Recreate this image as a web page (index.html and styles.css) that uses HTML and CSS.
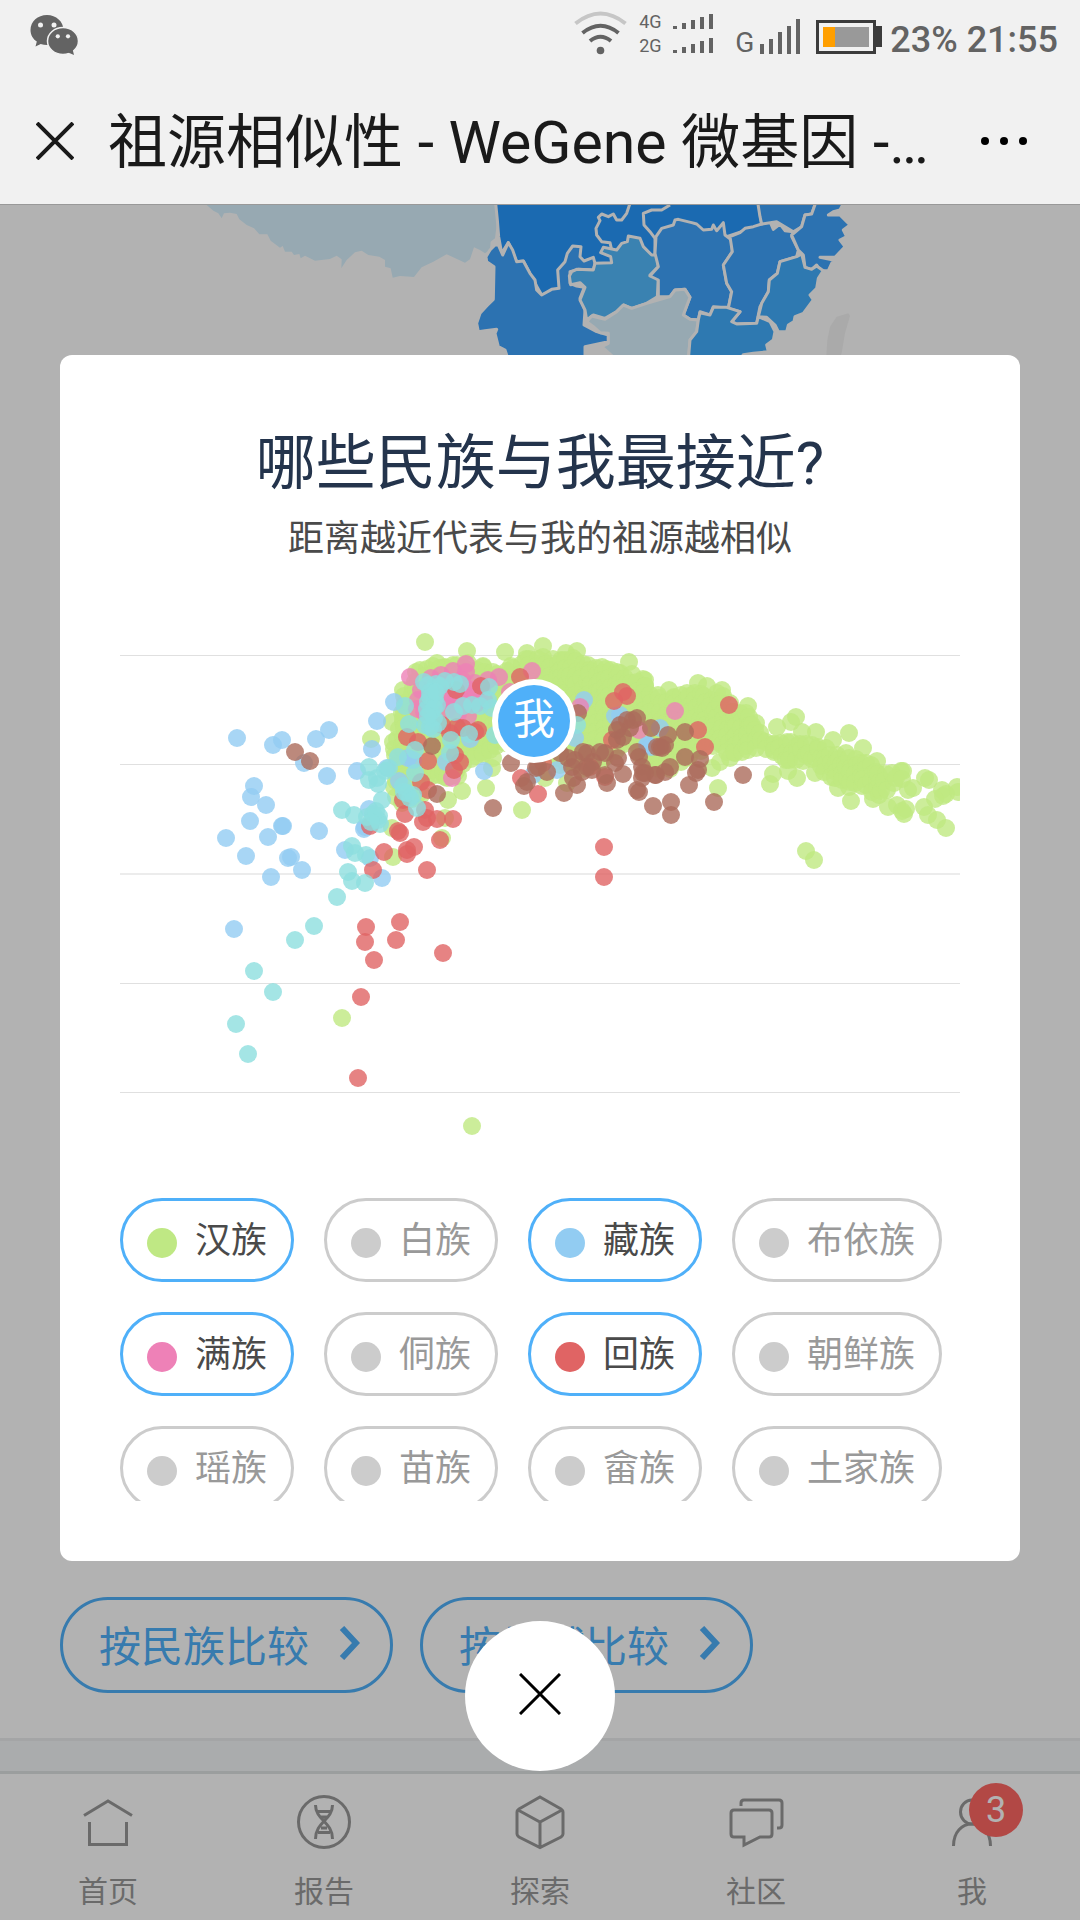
FILE: index.html
```html
<!DOCTYPE html>
<html lang="zh-CN">
<head>
    <meta charset="UTF-8">
    <title>祖源相似性 - WeGene 微基因</title>
    <meta name="viewport" content="width=device-width, initial-scale=1">
    <link rel="stylesheet" href="styles.css">
</head>
<body>

<header class="top">
    <div class="status-bar">
        <svg class="wechat" width="50" height="44" viewBox="29 13 50 44">
            <path fill="#636363" d="M47 15c-9.300 0-16.500 6.600-16.500 15 0 5 2.500 9 6.300 11.600L35.500 46.500l5.200-2.600c2 .7 4.200 1.100 6.300 1.100 9.100 0 16.500-6.700 16.500-15S56.100 15 47 15z"/>
            <ellipse cx="63" cy="41" rx="15.500" ry="13.500" fill="#636363" stroke="#f1f1f1" stroke-width="1.500"/>
            <path fill="#636363" d="M67 52l7 3-1.500-6z"/>
            <g fill="#f1f1f1">
                <circle cx="40.500" cy="25" r="2.500"/>
                <circle cx="54" cy="25" r="2.500"/>
                <circle cx="57.800" cy="36.300" r="2.100"/>
                <circle cx="68" cy="36.300" r="2.100"/>
            </g>
        </svg>
        <div class="indicators">
            <svg class="wifi" width="54" height="46" viewBox="574 9 54 46" fill="none" stroke="#636363" stroke-width="4">
                <path stroke="#c6c6c6" d="M576.500 23.500Q601.500 3.500 626.500 23.500"/>
                <path d="M583.500 33Q601.500 18.500 619.500 33"/>
                <path d="M591 41Q601.500 32.500 612 41"/>
                <circle cx="601.500" cy="50.500" r="3.800" fill="#636363" stroke="none"/>
            </svg>
            <div class="sims">
                <div class="sim">
                    <span>4G</span>
                    <svg width="40" height="15" fill="#636363">
                        <path d="M0 12h4v3H0zM9 9h4v6H9zM18 6h4v9h-4zM27 3h4v12h-4zM36 0h4v15h-4z"/>
                    </svg>
                </div>
                <div class="sim">
                    <span>2G</span>
                    <svg width="40" height="15" fill="#636363">
                        <path d="M0 12h4v3H0zM9 9h4v6H9zM18 6h4v9h-4zM27 3h4v12h-4zM36 0h4v15h-4z"/>
                    </svg>
                </div>
            </div>
            <div class="signal">
                <span>G</span>
                <svg width="40" height="35" fill="#636363">
                    <path d="M0 25h4v10H0zM9 20h4v15H9zM18 13h4v22h-4zM27 7h4v28h-4zM36 0h4v35h-4z"/>
                </svg>
            </div>
            <svg class="battery" width="66" height="34">
                <rect x="1.500" y="1.500" width="57" height="31" fill="none" stroke="#3c3c3c" stroke-width="3"/>
                <rect x="60" y="6" width="6" height="21" fill="#3c3c3c"/>
                <rect x="7" y="7" width="46" height="20" fill="#999"/>
                <rect x="7" y="7" width="12" height="20" fill="#ff9f00"/>
            </svg>
            <span class="clock">23% 21:55</span>
        </div>
    </div>
    <div class="title-bar">
        <button class="icon-btn" aria-label="关闭">
            <svg width="38" height="38" fill="none" stroke="#1a1a1a" stroke-width="4"><path d="M1 1L37 37M37 1L1 37"/></svg>
        </button>
        <h1>祖源相似性 - WeGene 微基因 -…</h1>
        <button class="icon-btn" aria-label="更多">
            <svg width="48" height="10"><circle cx="5" cy="5" r="4"/><circle cx="24" cy="5" r="4"/><circle cx="43" cy="5" r="4"/></svg>
        </button>
    </div>
</header>

<div class="content">
    <main>
        <svg class="map" viewBox="-540 15 3240 450" stroke="#fff" stroke-width="9" stroke-linejoin="round">
            <!-- 西藏 -->
            <path fill="#d9f3ff" stroke="none" d="M80 15L100 32 115 40 125 55 132 40 150 38 170 42 178 58 200 75 222 85 238 103 262 103 272 122 300 143 308 138 315 155 335 155 342 165 358 162 362 175 375 167 405 182 450 177 470 167 485 178 484 205 500 180 525 157 545 152 565 165 598 170 615 180 615 200 632 205 638 233 660 228 702 231 725 202 760 185 800 163 855 188 870 178 882 142 900 150 915 160 930 150 932 125 945 115 952 60 945 15z"/>
            <!-- 四川 湖北 -->
            <path fill="#2899fe" d="M946 0L952 60 956 110 965 160 985 128 1010 185 1030 183 1065 250 1085 285 1140 265 1295 190 1430 190 1640 110 1745 75 1735 0z"/>
            <!-- 云南 -->
            <path fill="#40a4fe" d="M930 150L945 135 955 135 968 165 985 128 998 150 1010 185 1030 183 1050 220 1065 240 1070 270 1085 285 1115 268 1137 265 1133 210 1155 185 1162 160 1178 138 1203 140 1200 170 1212 183 1240 172 1245 190 1240 210 1195 208 1170 215 1170 250 1190 258 1213 262 1200 295 1215 330 1212 375 1250 395 1285 405 1285 425 1215 440 1215 480 985 480 975 450 955 440 945 400 950 388 915 392 895 395 890 370 900 340 920 318 940 298 942 200 920 185 918 170z"/>
            <g transform="translate(1080 0)">
                <!-- 重庆 -->
                <path fill="none" d="M270 10L260 40 245 60 230 60 220 42 205 50 185 42 175 52 180 62 168 85 170 105 185 125 210 128 215 150M390 15L365 30 335 30 310 40 312 75 330 95 345 115 345 165"/>
                <!-- 贵州 -->
                <path fill="#53bafe" d="M95 215L110 208 160 210 165 190 215 188 212 170 182 158 190 142 230 150 245 130 262 125 265 108 300 115 310 140 335 165 350 165 355 200 330 225 355 235 352 290 320 310 275 325 250 315 230 335 195 355 160 345 140 360 135 330 120 300 135 262 120 248 92 254 88 228z"/>
                <!-- 湖南 -->
                <path fill="#40a4fe" d="M348 110L365 85 400 75 405 60 415 58 455 68 470 72 490 90 515 88 520 75 530 92 550 68 555 105 575 120 577 155 550 195 560 250 575 275 565 325 520 320 510 345 480 335 475 360 450 358 430 345 450 292 435 268 405 270 390 290 355 290 355 240 330 228 355 200 345 160z"/>
                <!-- 江西 -->
                <path fill="#40a4fe" d="M570 110L600 98 615 85 640 80 665 72 690 65 700 88 720 72 735 92 760 95 755 110 775 150 770 170 720 185 712 220 688 240 685 275 660 320 650 370 590 372 575 365 600 335 565 325 575 275 560 250 550 195 577 155z"/>
                <!-- 安徽 -->
                <path fill="#40a4fe" d="M652 0L660 50 665 72 710 65 735 80 760 95 785 80 795 45 815 42 830 0z"/>
                <!-- 浙江 -->
                <path fill="#40a4fe" d="M830 0L815 42 795 45 785 80 755 105 775 150 790 165 795 202 815 208 830 195 840 212 865 212 880 180 840 172 885 172 915 140 900 120 920 110 910 90 930 75 900 45 865 45 880 35 900 30 915 0z"/>
                <!-- 福建 -->
                <path fill="#42aefe" d="M785 162L795 202 815 208 830 198 850 212 835 235 830 265 810 285 820 300 790 340 765 350 762 365 745 375 740 395 715 395 705 375 680 352 655 350 665 310 685 275 688 240 712 220 720 185 770 170z"/>
                <!-- 广西 -->
                <path fill="#d9f3ff" d="M140 365L155 348 195 358 230 335 250 315 275 325 320 310 390 290 405 270 435 268 450 292 430 345 450 358 475 360 470 395 450 420 445 480 230 480 185 440 205 430 205 400 180 398 160 380z"/>
                <!-- 广东 -->
                <path fill="#42aefe" d="M475 360L480 338 510 345 520 322 560 322 600 335 575 365 590 372 650 370 655 350 690 365 705 395 700 420 680 435 685 455 640 460 610 464 600 480 445 480 450 420 470 395z"/>
                <!-- 台湾 -->
                <path fill="#f4f4f4" stroke="none" d="M890 350L925 340 930 348 915 400 905 460 895 480 858 480 862 420 870 380z"/>
            </g>
        </svg>
        <div class="compare">
            <button class="compare-btn"><span>按民族比较</span>
                <svg width="21" height="34" fill="none" stroke="#4fb0f9" stroke-width="6"><path d="M3 2L17 17 3 32"/></svg>
            </button>
            <button class="compare-btn"><span>按地域比较</span>
                <svg width="21" height="34" fill="none" stroke="#4fb0f9" stroke-width="6"><path d="M3 2L17 17 3 32"/></svg>
            </button>
        </div>
        <div class="divider"></div>
    </main>

    <nav class="tabs">
        <a href="#">
            <svg width="60" height="60" viewBox="0 0 60 60">
                <path d="M6 23.500L30 9 54 23.500M11.500 30v22.500h37V30"/>
            </svg>
            首页
        </a>
        <a href="#">
            <svg width="60" height="60" viewBox="0 0 60 60">
                <circle cx="30" cy="30" r="25.500"/>
                <path d="M21.500 13C21.500 28 38.500 30 38.500 47M38.500 13C38.500 28 21.500 30 21.500 47M23 19.500h14M24 40.500h12M27 25h6M27 36h6"/>
            </svg>
            报告
        </a>
        <a href="#">
            <svg width="60" height="60" viewBox="0 0 60 60">
                <path d="M30 5L51 17Q53 18.500 53 20V42Q53 43.500 51 45L30 55.500 9 45Q7 43.500 7 42V20Q7 18.500 9 17zM8 18L30 30 52 18M30 30V55"/>
            </svg>
            探索
        </a>
        <a href="#">
            <svg width="60" height="60" viewBox="0 0 60 60">
                <path d="M15 14V11Q15 8 18 8H53Q56 8 56 11V33Q56 36 53 36H51M8 18H43Q46 18 46 21V42Q46 45 43 45H34L18 53V45H8Q5 45 5 42V21Q5 18 8 18z"/>
            </svg>
            社区
        </a>
        <a href="#">
            <svg width="60" height="60" viewBox="0 0 60 60">
                <ellipse cx="30" cy="20" rx="11.500" ry="12"/>
                <path d="M11.500 54C11.500 40 20 32 30 32S48.500 40 48.500 54"/>
            </svg>
            我
            <span class="badge">3</span>
        </a>
    </nav>

    <div class="overlay">
        <section class="modal">
            <h2>哪些民族与我最接近?</h2>
            <p>距离越近代表与我的祖源越相似</p>
            <svg class="chart" id="chart" viewBox="120 585 840 583">
                <g stroke="#e0e0e0">
                    <path d="M120 655.500H960M120 764.500H960M120 983.500H960M120 1092.500H960"/>
                    <path stroke="#ececec" stroke-width="2" d="M120 874H960"/>
                </g>
                <g id="points" fill-opacity="0.800"></g>
                <circle cx="534" cy="721" r="42" fill="#fff"/>
                <circle cx="534" cy="721" r="36" fill="#4fb0f9"/>
                <text x="534" y="734" text-anchor="middle">我</text>
            </svg>
            <div class="legend">
                <label><input type="checkbox" class="han" checked>汉族</label>
                <label><input type="checkbox">白族</label>
                <label><input type="checkbox" class="zang" checked>藏族</label>
                <label><input type="checkbox">布依族</label>
                <label><input type="checkbox" class="man" checked>满族</label>
                <label><input type="checkbox">侗族</label>
                <label><input type="checkbox" class="hui" checked>回族</label>
                <label><input type="checkbox">朝鲜族</label>
                <label><input type="checkbox">瑶族</label>
                <label><input type="checkbox">苗族</label>
                <label><input type="checkbox">畲族</label>
                <label><input type="checkbox">土家族</label>
            </div>
        </section>
        <button class="close" aria-label="关闭">
            <svg width="42" height="42" fill="none" stroke="#000" stroke-width="3"><path d="M1 1L41 41M41 1L1 41"/></svg>
        </button>
    </div>
</div>

<script src="chart.js"></script>
</body>
</html>
```

FILE: styles.css
```css
* {
    box-sizing: border-box;
    margin: 0;
    padding: 0;
}

body {
    font-family: Roboto, 'Noto Sans CJK SC', sans-serif;
    background: #fff;
    color: #4a4a4a;
    display: flex;
    flex-direction: column;
    min-height: 100vh;
}

svg {
    display: block;
    flex: none;
}

button {
    font-family: inherit;
    background: none;
    border: none;
    cursor: pointer;
}

/* Top bars */
.top {
    background: #f1f1f1;
}

.status-bar {
    display: flex;
    justify-content: space-between;
    height: 78px;
    padding: 9px 22px 0 29px;
    color: #636363;
}

.wechat {
    margin-top: 4px;
}

.indicators {
    display: flex;
    align-items: flex-start;
}

.sims {
    margin: 0 22px 0 12px;
}

.sim {
    display: flex;
    align-items: center;
    justify-content: space-between;
    width: 74px;
    height: 24px;
    font-size: 18px;
}

.signal {
    display: flex;
    align-items: flex-end;
    gap: 6px;
    height: 45px;
    font-size: 28px;
    line-height: 22px;
}

.battery {
    margin: 11px 8px 0 16px;
}

.clock {
    font-size: 36px;
    line-height: 42px;
    font-weight: 500;
    padding-top: 10px;
}

.title-bar {
    display: flex;
    align-items: center;
    height: 127px;
    padding: 0 52px 0 36px;
    border-bottom: 1px solid #999;
}

.title-bar h1 {
    flex: 1;
    margin-left: 34px;
    padding-bottom: 8px;
    font-size: 59px;
    font-weight: 400;
    color: #1a1a1a;
    white-space: nowrap;
    overflow: hidden;
}

/* Page under the overlay */
.content {
    position: relative;
    flex: 1;
    display: flex;
    flex-direction: column;
}

main {
    flex: 1;
    display: flex;
    flex-direction: column;
    justify-content: space-between;
}

.map {
    width: 100%;
}

.compare {
    display: flex;
    gap: 27px;
    margin: auto 60px 45px;
}

.compare-btn {
    display: flex;
    align-items: center;
    gap: 30px;
    height: 96px;
    padding: 0 30px 0 36px;
    border: 3px solid #4fb0f9;
    border-radius: 48px;
    color: #4fb0f9;
    font-size: 42px;
    white-space: nowrap;
}

.compare-btn span,
.compare-btn svg {
    margin-bottom: 4px;
}

.divider {
    height: 33px;
    background: #f4f7f8;
    border-top: 3px solid #ebedee;
}

.tabs {
    display: flex;
    height: 149px;
    border-top: 3px solid #dfe2e3;
}

.tabs a {
    position: relative;
    flex: 1;
    display: flex;
    flex-direction: column;
    align-items: center;
    gap: 19px;
    padding-top: 18px;
    color: #999;
    font-size: 30px;
    line-height: 42px;
    text-decoration: none;
}

.tabs svg {
    fill: none;
    stroke: #999;
    stroke-width: 3;
}

.badge {
    position: absolute;
    top: 9px;
    left: 50%;
    width: 54px;
    height: 54px;
    margin-left: -3px;
    border-radius: 50%;
    background: #ff6764;
    color: #fff;
    font-size: 36px;
    line-height: 54px;
    text-align: center;
}

/* Modal */
.overlay {
    position: absolute;
    inset: 0;
    background: rgba(0, 0, 0, 0.3);
    padding: 150px 60px 0;
}

.modal {
    background: #fff;
    border-radius: 12px;
    padding: 64px 60px 60px;
    text-align: center;
}

.modal h2 {
    font-size: 60px;
    line-height: 90px;
    font-weight: 400;
    color: #24344c;
}

.modal p {
    margin-top: 3px;
    font-size: 36px;
    line-height: 54px;
}

.chart {
    width: 100%;
    margin: 19px 0 30px;
}

.chart text {
    fill: #fff;
    font-size: 42px;
}

.legend {
    display: flex;
    flex-wrap: wrap;
    align-content: flex-start;
    gap: 30px;
    height: 303px;
    overflow: hidden;
}

.legend label {
    display: flex;
    align-items: center;
    gap: 18px;
    height: 84px;
    padding: 1px 24px 0;
    border: 3px solid #ccc;
    border-radius: 42px;
    color: #999;
    font-size: 36px;
    line-height: 54px;
}

.legend label:has(:checked) {
    border-color: #4fb0f9;
    color: #4a4a4a;
}

.legend input {
    appearance: none;
    width: 30px;
    height: 30px;
    margin-top: 5px;
    border-radius: 50%;
    background: #ccc;
}

.legend .han { background: #bfe884; }
.legend .zang { background: #92ccf2; }
.legend .man { background: #ee81b7; }
.legend .hui { background: #e06464; }

.close {
    display: flex;
    align-items: center;
    justify-content: center;
    width: 150px;
    height: 150px;
    margin: 60px auto 0;
    padding-bottom: 4px;
    border-radius: 50%;
    background: #fff;
}
```

FILE: chart.js
```js
// Main body of the Han cluster: [x, top, bottom]
const hanBand = [
    [395, 740, 800], [405, 695, 805], [420, 668, 795], [432, 660, 780], [445, 662, 780],
    [458, 665, 775], [470, 662, 765], [485, 665, 758], [500, 670, 745], [515, 665, 740],
    [530, 657, 745], [545, 655, 755], [560, 660, 770], [577, 658, 770], [590, 663, 770],
    [605, 665, 760], [620, 668, 750], [632, 675, 745], [645, 685, 765], [660, 695, 770],
    [675, 695, 768], [690, 690, 760], [705, 692, 750], [722, 695, 750], [735, 708, 755],
    [748, 712, 752], [760, 732, 748], [775, 742, 755], [790, 740, 762], [805, 740, 760],
    [820, 744, 766], [835, 752, 783], [850, 754, 790], [865, 760, 792], [880, 770, 796],
    [895, 774, 784], [905, 777, 785]
];

const series = [
    {
        color: '#bfe881',
        points: [
            [425, 642], [467, 651], [505, 652], [543, 646], [577, 651], [566, 653], [527, 653], [629, 662], [643, 679],
            [371, 739], [522, 810], [462, 791], [486, 788], [448, 800], [445, 818], [393, 857], [442, 838], [392, 828],
            [492, 768], [493, 758], [393, 742], [392, 722], [403, 690], [545, 778], [567, 783], [342, 1018], [472, 1126],
            [645, 680], [669, 690], [698, 683], [707, 686], [722, 690], [748, 706], [756, 723], [796, 717], [791, 722],
            [777, 727], [816, 732], [802, 732], [849, 733], [833, 740], [863, 748], [877, 761], [773, 774], [770, 784],
            [788, 771], [797, 778], [718, 788], [712, 768], [720, 762], [730, 758], [815, 773], [838, 788], [851, 801],
            [873, 799], [888, 807], [897, 805], [902, 811], [904, 814], [906, 809], [901, 771], [903, 771], [913, 788],
            [908, 790], [925, 778], [929, 780], [942, 790], [943, 796], [946, 794], [935, 799], [924, 807], [928, 815],
            [937, 820], [946, 828], [957, 787], [958, 792], [806, 851], [814, 860]
        ]
    },
    {
        color: '#92ccf2',
        points: [
            [237, 738], [273, 745], [282, 740], [316, 739], [329, 730], [304, 763], [327, 776], [254, 786], [251, 797],
            [266, 805], [250, 821], [282, 826], [283, 826], [268, 837], [226, 838], [319, 831], [246, 856], [288, 858],
            [291, 857], [302, 870], [271, 877], [234, 929], [377, 721], [372, 749], [394, 702], [357, 771], [484, 771],
            [345, 850], [382, 878], [369, 809], [364, 829], [365, 827], [399, 781], [370, 858], [408, 758], [446, 762],
            [470, 739], [387, 768], [413, 760], [584, 700], [575, 738], [615, 716], [557, 770], [533, 775], [647, 745],
            [660, 728], [648, 745], [651, 747], [620, 715]
        ]
    },
    {
        color: '#ee81b7',
        points: [
            [410, 677], [441, 675], [453, 671], [466, 664], [466, 672], [431, 678], [499, 677], [510, 692], [532, 671],
            [580, 707], [452, 778], [488, 680], [450, 683], [458, 686], [446, 692], [456, 697], [464, 693], [472, 690],
            [479, 695], [470, 702], [462, 706], [452, 704], [447, 710], [458, 714], [468, 716], [421, 690], [418, 700],
            [424, 712], [475, 683], [482, 688], [440, 684], [675, 711], [639, 730], [476, 704], [484, 700], [466, 698],
            [448, 699], [462, 680], [417, 709]
        ]
    },
    {
        color: '#e06464',
        points: [
            [456, 690], [481, 686], [520, 677], [623, 692], [627, 696], [614, 701], [478, 730], [475, 732], [457, 727],
            [450, 733], [442, 725], [463, 728], [407, 737], [418, 742], [428, 761], [455, 755], [460, 762], [454, 770],
            [421, 782], [428, 790], [403, 800], [425, 810], [405, 814], [423, 822], [427, 818], [437, 819], [453, 819],
            [398, 831], [400, 833], [440, 840], [384, 852], [407, 850], [414, 847], [407, 854], [427, 870], [373, 870],
            [370, 826], [521, 778], [538, 794], [604, 847], [604, 877], [605, 777], [612, 740], [590, 767], [543, 763],
            [729, 705], [698, 730], [705, 747], [366, 927], [400, 922], [365, 942], [396, 940], [374, 960], [443, 953],
            [361, 997], [358, 1078]
        ]
    },
    {
        color: '#ab6b5b',
        points: [
            [295, 752], [310, 761], [432, 746], [437, 794], [493, 808], [511, 763], [524, 786], [527, 782], [536, 768],
            [538, 767], [547, 772], [560, 753], [568, 758], [572, 767], [573, 778], [577, 785], [564, 793], [575, 760],
            [583, 752], [587, 753], [587, 767], [582, 772], [600, 752], [605, 753], [607, 783], [605, 775], [615, 763],
            [623, 774], [618, 758], [617, 740], [623, 737], [620, 725], [627, 720], [633, 720], [637, 718], [630, 728],
            [617, 730], [578, 713], [637, 752], [639, 757], [642, 767], [643, 773], [637, 790], [639, 792], [642, 778],
            [653, 806], [655, 775], [651, 728], [657, 747], [685, 732], [668, 735], [660, 747], [665, 745], [662, 748],
            [685, 757], [700, 759], [698, 770], [696, 773], [689, 785], [670, 767], [665, 772], [656, 775], [645, 773],
            [743, 775], [714, 802], [671, 802], [671, 815], [593, 762], [592, 770]
        ]
    },
    {
        color: '#8ddede',
        points: [
            [254, 971], [273, 992], [236, 1024], [248, 1054], [295, 940], [314, 926], [337, 897], [348, 872], [352, 881],
            [365, 883], [352, 846], [355, 853], [366, 855], [342, 810], [354, 815], [367, 817], [373, 814], [379, 816],
            [378, 820], [380, 824], [382, 800], [369, 767], [369, 780], [377, 778], [378, 784], [385, 771], [389, 768],
            [398, 757], [404, 792], [407, 793], [413, 795], [417, 808], [415, 750], [415, 773], [451, 740], [450, 753],
            [469, 734], [409, 724], [405, 706], [489, 687], [460, 684], [454, 682], [454, 712], [463, 706], [472, 705],
            [480, 706], [492, 708], [495, 735], [425, 725], [438, 723], [430, 727], [428, 685], [436, 684], [424, 682],
            [440, 686], [430, 692], [435, 699], [428, 702], [437, 705], [431, 712], [434, 718], [427, 709], [445, 681],
            [433, 729], [577, 725], [430, 697], [434, 708], [428, 716], [436, 692], [376, 811], [371, 822], [410, 798],
            [403, 786], [488, 700]
        ]
    }
];

// Small seeded generator so that the cloud looks the same on every load
let seed = 7;
function random() {
    seed = (seed * 16807) % 2147483647;
    return seed / 2147483647;
}

function fillBand(band) {
    const points = [];
    for (let i = 0; i < band.length - 1; i++) {
        const [x1, top1, bottom1] = band[i];
        const [x2, top2, bottom2] = band[i + 1];
        for (let x = x1; x < x2; x += 6) {
            const t = (x - x1) / (x2 - x1);
            const top = top1 + (top2 - top1) * t;
            const bottom = bottom1 + (bottom2 - bottom1) * t;
            for (let y = top + random() * 6; y <= bottom; y += 8) {
                points.push([Math.round(x + random() * 4 - 2), Math.round(y + random() * 4 - 2)]);
            }
        }
    }
    return points;
}

function drawPoints() {
    const group = document.getElementById('points');
    series[0].points = series[0].points.concat(fillBand(hanBand));
    series.forEach(function (item) {
        item.points.forEach(function (point) {
            const dot = document.createElementNS('http://www.w3.org/2000/svg', 'circle');
            dot.setAttribute('cx', point[0]);
            dot.setAttribute('cy', point[1]);
            dot.setAttribute('r', 9);
            dot.setAttribute('fill', item.color);
            group.appendChild(dot);
        });
    });
}

drawPoints();
```
